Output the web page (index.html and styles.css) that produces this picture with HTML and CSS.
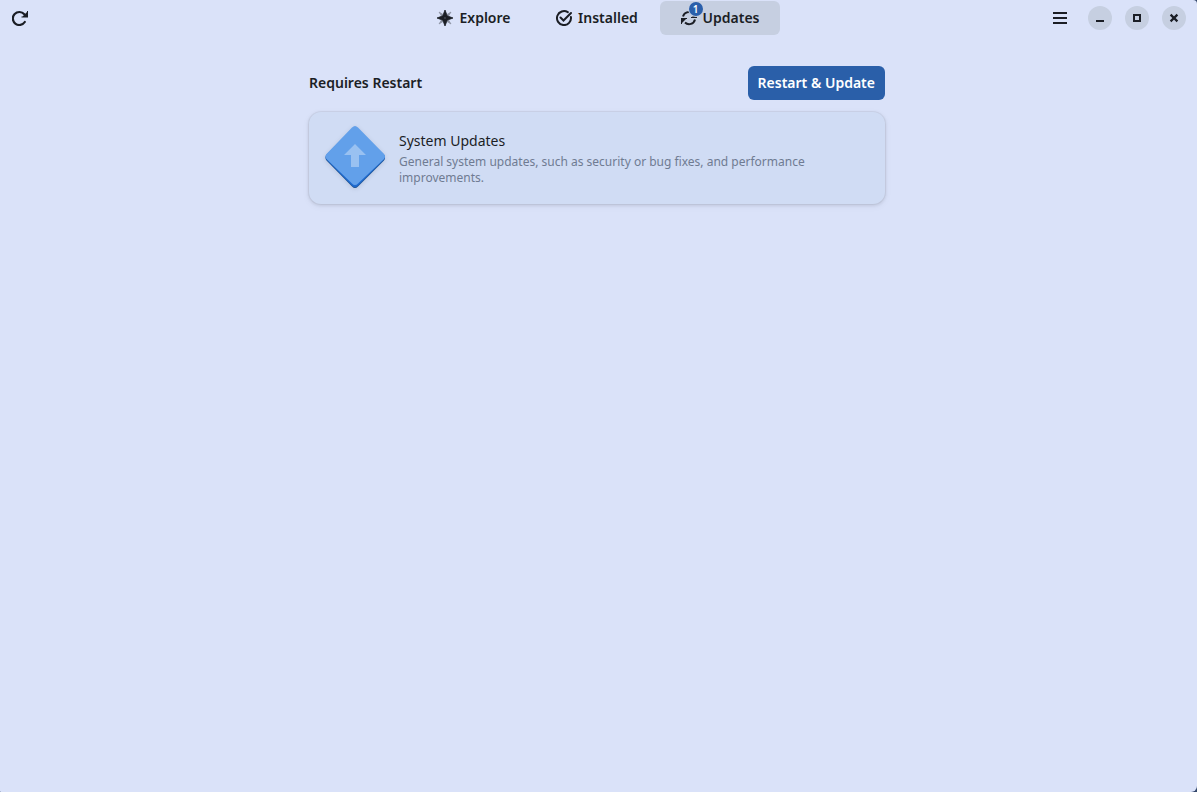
FILE: index.html
```html
<!DOCTYPE html>
<html lang="en">
<head>
<meta charset="utf-8">
<title>Software</title>
<link rel="stylesheet" href="styles.css">
</head>
<body>
<div class="window">
  <header class="headerbar">
    <div class="start">
      <button class="flat" aria-label="Refresh">
        <svg width="16" height="16" viewBox="0 0 16 16"><path d="M12.300 4.300A6.500 6.500 0 1 0 12.800 12" fill="none" stroke="currentColor" stroke-width="2.200" stroke-linecap="round"/><path d="M16 1v6.500H9.500V6.500H10.500L15 2V1z" fill="currentColor"/></svg>
      </button>
    </div>
    <nav class="tabs">
      <button class="tab">
        <svg width="16" height="16" viewBox="0 0 16 16"><path d="M2 2l4 2.500-1.500 1.500zM14 2l-2.500 4L10 4.500zM2 14l2.500-4L6 11.500zM14 14l-4-2.500 1.500-1.500z" fill="currentColor" stroke="currentColor" stroke-width=".8" opacity=".4"/><path fill-rule="evenodd" d="M8 0l2.200 5.800L16 8l-5.800 2.200L8 16l-2.200-5.800L0 8l5.800-2.200zM8 7.200a.8.8 0 1 0 0 1.600.8.8 0 0 0 0-1.600z" fill="currentColor" stroke="currentColor" stroke-width=".8"/></svg>
        <span>Explore</span>
      </button>
      <button class="tab">
        <svg width="16" height="16" viewBox="0 0 16 16"><path d="M11.800 2.200A7 7 0 1 0 14.900 7" fill="none" stroke="currentColor" stroke-width="2" stroke-linecap="round"/><path d="M4.500 7.500l3 3L15 3" fill="none" stroke="currentColor" stroke-width="2" stroke-linecap="round"/></svg>
        <span>Installed</span>
      </button>
      <button class="tab active">
        <span class="badged">
          <svg width="16" height="16" viewBox="0 0 16 16"><path d="M2 6.500A6 6 0 0 1 11.500 3.300M14 9.500A6 6 0 0 1 4 12.500" fill="none" stroke="currentColor" stroke-width="2"/><path d="M0 8h6v1H5L1 13v1H0z" fill="currentColor"/><path d="M16 8h-6V7h1l4-4V2h1z" fill="currentColor"/></svg>
          <span class="badge">1</span>
        </span>
        <span>Updates</span>
      </button>
    </nav>
    <div class="end">
      <button class="flat" aria-label="Main menu">
        <svg width="16" height="16" viewBox="0 0 16 16" shape-rendering="crispEdges"><path d="M1 2h14v2H1zM1 7h14v2H1zM1 12h14v2H1z" fill="currentColor"/></svg>
      </button>
      <button class="control" aria-label="Minimize">
        <svg width="16" height="16" viewBox="0 0 16 16"><path d="M4 10h8v2H4z" fill="currentColor"/></svg>
      </button>
      <button class="control" aria-label="Maximize">
        <svg width="16" height="16" viewBox="0 0 16 16"><path d="M5 5h6v6H5z" fill="none" stroke="currentColor" stroke-width="2"/></svg>
      </button>
      <button class="control" aria-label="Close">
        <svg width="16" height="16" viewBox="0 0 16 16"><path d="M4.600 4.600l6.800 6.800M11.400 4.600l-6.800 6.800" stroke="currentColor" stroke-width="2.200"/></svg>
      </button>
    </div>
  </header>
  <main class="page">
    <div class="section-head">
      <h1>Requires Restart</h1>
      <button class="suggested">Restart &amp; Update</button>
    </div>
    <section class="card">
      <svg class="app-icon" width="64" height="64" viewBox="0 0 64 64">
        <path d="M29 5q3-3 6 0l26 24.500q2 2.500 0 5L35 60.500q-3 3-6 0L3.500 34.500q-2-2.500 0-5z" fill="#1c5396"/>
        <path d="M29 4q3-3 6 0l26 24.500q2 2.500 0 5L35 59.500q-3 3-6 0L3.500 33.500q-2-2.500 0-5z" fill="#1f6bd0"/>
        <path d="M29 1.500q3-3 6 0l26 26.500q2 2.500 0 5L35 57.500q-3 3-6 0L3.500 33q-2-2.500 0-5z" fill="#62a0ea"/>
        <path d="M32 18l11 11h-7v12h-8V29h-7z" fill="#99c1f1"/>
      </svg>
      <div>
        <h2>System Updates</h2>
        <p>General system updates, such as security or bug fixes, and performance improvements.</p>
      </div>
    </section>
  </main>
</div>
</body>
</html>
```
FILE: styles.css
```css
* { box-sizing: border-box; }
body {
  margin: 0;
  background: #33476b;
  color: #1b1e25;
  font: 14px/20px "Noto Sans", sans-serif;
}
h1, h2, p { margin: 0; }
button {
  border: 0;
  padding: 0;
  background: transparent;
  color: inherit;
  font: inherit;
}
svg { display: block; flex: none; }
.window {
  min-height: 100vh;
  padding-right: 3px;
  background: #dae2f9;
  border-radius: 0 4px 6px 1px;
}
.headerbar {
  display: grid;
  grid-template-columns: 1fr auto 1fr;
  align-items: center;
  padding: 1px 3px 0;
}
.start, .end { display: flex; align-items: center; }
.end { justify-content: flex-end; gap: 13px; padding-right: 5px; }
.flat {
  display: grid;
  place-items: center;
  width: 34px;
  height: 34px;
}
.end .flat { margin-right: -2px; }
.control {
  display: grid;
  place-items: center;
  width: 24px;
  height: 24px;
  border-radius: 50%;
  background: #c6cfe1;
}
.tabs { display: flex; gap: 3px; }
.tab {
  display: flex;
  align-items: center;
  justify-content: center;
  gap: 6px;
  width: 120px;
  height: 34px;
  border-radius: 6px;
  font-weight: 600;
}
.tab.active { background: #c6cfe1; }
.badged { position: relative; }
.badge {
  position: absolute;
  top: -8px;
  right: -6px;
  width: 14px;
  height: 14px;
  border-radius: 50%;
  background: #2a5fab;
  box-shadow: 0 0 0 1px #c6cfe1;
  color: #fff;
  font-size: 10px;
  line-height: 14px;
}
.page {
  max-width: 600px;
  margin: 0 auto;
  padding: 31px 12px;
}
.section-head {
  display: flex;
  align-items: center;
  justify-content: space-between;
  margin-bottom: 12px;
}
.section-head h1 { font-size: 14px; font-weight: 600; }
.suggested {
  height: 34px;
  padding: 0 10px;
  border-radius: 6px;
  background: #2a5fa9;
  color: #fff;
  font-weight: 600;
}
.card {
  display: flex;
  align-items: center;
  gap: 12px;
  padding: 14px;
  border-radius: 12px;
  background: #d0dcf4;
  box-shadow: 0 0 0 1px #0000000a, 0 1px 3px 1px #00000014, 0 2px 6px 2px #00000008;
}
.app-icon { filter: drop-shadow(0 1px 2px #0000001c); }
.card h2 { font-size: 14px; font-weight: 400; }
.card p {
  max-width: 420px;
  margin-top: 3px;
  color: #6f7b92;
  font-size: 12px;
  line-height: 16px;
}
```
